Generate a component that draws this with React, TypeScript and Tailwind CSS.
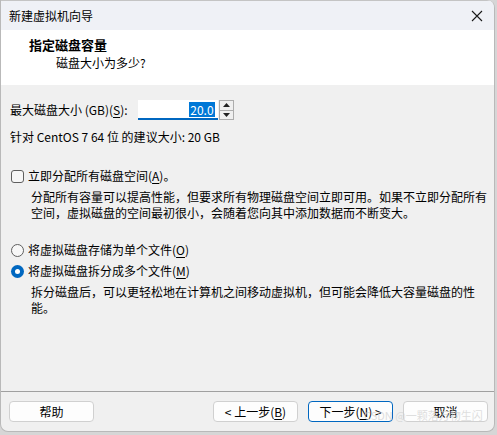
import React from 'react';

const font = { fontFamily: '"Noto Sans CJK SC", "Noto Sans", sans-serif' };

const U: React.FC<{ children: React.ReactNode }> = ({ children }) => (
  <span className="underline underline-offset-2">{children}</span>
);

const Button: React.FC<{ children: React.ReactNode; primary?: boolean }> = ({ children, primary }) => (
  <button
    className={`h-[21px] w-[85px] rounded-[4px] bg-[#fdfdfd] text-[12px] leading-none text-black flex items-center justify-center ${
      primary ? 'border border-[#0067c0]' : 'border border-[#d0d0d0]'
    }`}
  >
    {children}
  </button>
);

export default function App() {
  return (
    <div className="w-[497px] h-[435px] bg-[#d6d6d6] overflow-hidden" style={font}>
      <div className="w-[495px] h-[432px] flex flex-col bg-[#f0f0f0] border-l border-r border-b border-[#b9b9b9] rounded-tr-[8px] rounded-b-[8px] overflow-hidden">
        {/* Title bar */}
        <div className="h-[30px] shrink-0 bg-[#eff1f6] border-t border-[#c4c4c4] flex items-center justify-between pl-[8px] pr-[9px]">
          <span className="text-[12px] text-black">新建虚拟机向导</span>
          <svg width="12" height="12" viewBox="0 0 12 12" className="mr-[2px]">
            <path d="M1 1 L11 11 M11 1 L1 11" stroke="#1a1a1a" strokeWidth="1.1" />
          </svg>
        </div>

        {/* Header */}
        <div className="h-[55px] shrink-0 bg-white pl-[28px] pt-[6px]">
          <div className="text-[13px] font-bold leading-[18px] text-black">指定磁盘容量</div>
          <div className="text-[12px] leading-[16px] text-black pl-[27px] mt-[1px]">磁盘大小为多少?</div>
        </div>

        {/* Body */}
        <div className="flex-1 pl-[9px] text-[12px] leading-[16px] text-black">
          <div className="mt-[15px] flex items-center h-[20px]">
            <span>
              最大磁盘大小 (GB)(<U>S</U>):
            </span>
            <div className="ml-[10px] w-[80px] h-[20px] bg-white border-b-2 border-[#0067c0] flex items-center justify-end pr-[3px]">
              <span className="bg-[#0078d7] text-white px-[1px] leading-[15px]">20.0</span>
            </div>
            <div className="ml-[1px] w-[15px] h-[20px] border border-[#adadad] bg-[#f0f0f0] flex flex-col">
              <div className="flex-1 flex items-center justify-center border-b border-[#adadad]">
                <svg width="7" height="4" viewBox="0 0 7 4">
                  <path d="M3.5 0 L7 4 L0 4 Z" fill="#222" />
                </svg>
              </div>
              <div className="flex-1 flex items-center justify-center">
                <svg width="7" height="4" viewBox="0 0 7 4">
                  <path d="M0 0 L7 0 L3.5 4 Z" fill="#222" />
                </svg>
              </div>
            </div>
          </div>

          <div className="mt-[9px]">针对 CentOS 7 64 位 的建议大小: 20 GB</div>

          <div className="mt-[23px] flex items-center">
            <div className="w-[13px] h-[13px] rounded-[3px] border border-[#5f5f5f] bg-[#f7f7f7] ml-[1px]" />
            <span className="ml-[4px]">
              立即分配所有磁盘空间(<U>A</U>)。
            </span>
          </div>
          <div className="mt-[5px] pl-[21px] whitespace-nowrap">
            <div>分配所有容量可以提高性能，但要求所有物理磁盘空间立即可用。如果不立即分配所有</div>
            <div>空间，虚拟磁盘的空间最初很小，会随着您向其中添加数据而不断变大。</div>
          </div>

          <div className="mt-[21px] flex items-center">
            <div className="w-[13px] h-[13px] rounded-full border border-[#5f5f5f] bg-[#f7f7f7] ml-[1px]" />
            <span className="ml-[4px]">
              将虚拟磁盘存储为单个文件(<U>O</U>)
            </span>
          </div>
          <div className="mt-[5px] flex items-center">
            <div className="w-[13px] h-[13px] rounded-full bg-[#0067c0] ml-[1px] flex items-center justify-center">
              <div className="w-[5px] h-[5px] rounded-full bg-white" />
            </div>
            <span className="ml-[4px]">
              将虚拟磁盘拆分成多个文件(<U>M</U>)
            </span>
          </div>
          <div className="mt-[5px] pl-[21px] whitespace-nowrap">
            <div>拆分磁盘后，可以更轻松地在计算机之间移动虚拟机，但可能会降低大容量磁盘的性</div>
            <div>能。</div>
          </div>
        </div>

        {/* Footer */}
        <div className="h-[40px] shrink-0 border-t border-[#a0a0a0] relative flex items-start pt-[9px] pl-[8px] pr-[6px]">
          <Button>帮助</Button>
          <div className="ml-auto flex gap-[10px]">
            <div className="flex gap-[10px]">
              <Button>
                &lt; 上一步(<U>B</U>)
              </Button>
              <Button primary>
                下一步(<U>N</U>) &gt;
              </Button>
            </div>
            <Button>取消</Button>
          </div>
          <span className="absolute left-[363px] top-[18px] text-[11px] leading-none text-[#d0d0d0]/70 whitespace-nowrap pointer-events-none">
            CSDN @一颗落万物生闪
          </span>
        </div>
      </div>
    </div>
  );
}
